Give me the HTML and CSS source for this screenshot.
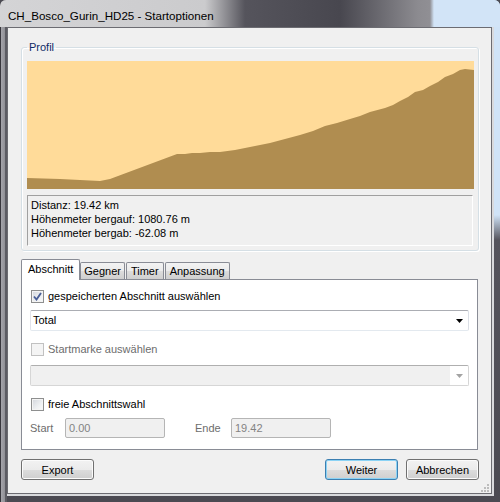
FILE: index.html
```html
<!DOCTYPE html>
<html lang="de">
<head>
    <meta charset="UTF-8">
    <meta name="viewport" content="width=device-width, initial-scale=1.0">
    <title>CH_Bosco_Gurin_HD25 - Startoptionen</title>
    <link rel="stylesheet" href="styles.css">
</head>
<body>

    <div class="window">
        <div class="titlebar">CH_Bosco_Gurin_HD25 - Startoptionen</div>

        <div class="client">
            <fieldset class="group">
                <legend>Profil</legend>
                <div class="chart">
                    <svg width="447" height="128" viewBox="0 0 447 128">
                        <rect width="447" height="128" fill="#ffdb99"/>
                        <polygon fill="#b08d50" points="0,117 33,118 73,120 83,118 150,93 158,93 165,92 173,92 183,91 193,91 208,89 223,86 243,82 258,78 273,74 286,70 298,65 310,62 323,58 333,55 343,51 358,47 366,44 373,40 381,36 388,31 396,29 403,25 411,21 418,16 426,13 433,9 438,8 447,9 447,128 0,128"/>
                    </svg>
                </div>
                <div class="stats">
                    <div>Distanz: 19.42 km</div>
                    <div>Höhenmeter bergauf: 1080.76 m</div>
                    <div>Höhenmeter bergab: -62.08 m</div>
                </div>
            </fieldset>

            <div class="tabs">
                <div class="tab-strip">
                    <div class="tab active">Abschnitt</div>
                    <div class="tab">Gegner</div>
                    <div class="tab">Timer</div>
                    <div class="tab">Anpassung</div>
                </div>
                <div class="tab-page">
                    <label class="check-row first">
                        <span class="checkbox">
                            <svg width="9" height="9" viewBox="0 0 9 9"><path d="M1 4.5 L3.5 7.5 L8 1" fill="none" stroke="#4a5f97" stroke-width="1.9"/></svg>
                        </span>
                        gespeicherten Abschnitt auswählen
                    </label>
                    <div class="combo">
                        <span class="combo-text">Total</span>
                        <span class="combo-arrow">
                            <svg width="7" height="4" viewBox="0 0 7 4"><polygon points="0,0 7,0 3.5,4" fill="#000"/></svg>
                        </span>
                    </div>

                    <label class="check-row disabled gap-large">
                        <span class="checkbox"></span>
                        Startmarke auswählen
                    </label>
                    <div class="combo disabled">
                        <span class="combo-text"></span>
                        <span class="combo-arrow">
                            <svg width="7" height="4" viewBox="0 0 7 4"><polygon points="0,0 7,0 3.5,4" fill="#a3a3a3"/></svg>
                        </span>
                    </div>

                    <label class="check-row gap-large">
                        <span class="checkbox"></span>
                        freie Abschnittswahl
                    </label>
                    <div class="range-row">
                        <span class="field-label">Start</span>
                        <span class="textbox">0.00</span>
                        <span class="field-label end">Ende</span>
                        <span class="textbox">19.42</span>
                    </div>
                </div>
            </div>

            <div class="buttons">
                <button class="btn">Export</button>
                <span class="spacer"></span>
                <button class="btn default">Weiter</button>
                <button class="btn">Abbrechen</button>
            </div>

            <div class="grip">
                <svg width="11" height="9" viewBox="0 0 11 9">
                    <rect x="8" y="0" width="2" height="2" fill="#bcbcbc"/>
                    <rect x="5" y="3" width="2" height="2" fill="#bcbcbc"/>
                    <rect x="8" y="3" width="2" height="2" fill="#bcbcbc"/>
                    <rect x="2" y="6" width="2" height="2" fill="#bcbcbc"/>
                    <rect x="5" y="6" width="2" height="2" fill="#bcbcbc"/>
                    <rect x="8" y="6" width="2" height="2" fill="#bcbcbc"/>
                </svg>
            </div>
        </div>
    </div>

</body>
</html>
```

FILE: styles.css
```css
body {
    margin: 0;
    font-family: 'Liberation Sans', Arial, sans-serif;
    font-size: 11px;
    color: #000;
    background-color: #4b4a52;
}

.window {
    width: 500px;
    height: 502px;
    display: flex;
    flex-direction: column;
    background:
        linear-gradient(to bottom, #d0e3f7 0, #d0e3f7 215px, #55545d 240px, #4b4a52 100%) right top / 8px 100% no-repeat,
        linear-gradient(to right, #38373d 0, #38373d 1px, #a5a5ab 1px, #8f8f95 5px, #5c5c63 5px) left top / 7px 100% no-repeat,
        #4b4a52;
    border-radius: 6px 6px 0 0;
    overflow: hidden;
}

.titlebar {
    height: 28px;
    box-sizing: border-box;
    padding: 9px 0 0 8px;
    font-size: 11.6px;
    line-height: 14px;
    white-space: nowrap;
    background: linear-gradient(to right, #d4d4d6 0, #cbcbcd 205px, #55545c 245px, #48474f 340px, #8c8b90 418px, #908f94 430px, #d2e4f7 434px);
    border-top: 1px solid #2c2c30;
    margin-top: -1px;
}

/* client area of the dialog */
.client {
    position: relative;
    flex: 1;
    margin: 0 8px 8px 7px;
    padding: 0 12px 0 13px;
    background-color: #f0f0f0;
    border: 1px solid #6c6c72;
    box-shadow: 1px 1px 0 1px #d9dadd;
}

.group {
    margin: 13px 0 0 0;
    padding: 8px 5px 4px 5px;
    min-width: 0;
    border: 1px solid #d5dfe5;
    border-radius: 3px;
    box-shadow: inset 1px 1px 0 #fff, 1px 1px 0 #fff;
}

.group legend {
    padding: 0 2px;
    line-height: 12px;
    color: #0f2a66;
}

.chart {
    height: 128px;
}

.chart svg {
    display: block;
}

.stats {
    margin-top: 6px;
    height: 47px;
    padding: 2px 3px 0;
    line-height: 14px;
    border: 1px solid;
    border-color: #a0a0a0 #fff #fff #a0a0a0;
}

/* tabs */
.tabs {
    margin-top: 8px;
}

.tab-strip {
    display: flex;
    align-items: flex-end;
    height: 20px;
    position: relative;
    z-index: 1;
}

.tab {
    height: 16px;
    padding: 0 4px;
    margin-left: 1px;
    line-height: 17px;
    border: 1px solid #898c95;
    border-bottom: none;
    border-radius: 2px 2px 0 0;
    background: linear-gradient(#f3f3f3 0, #ebebeb 50%, #dddddd 50%, #cfcfcf 100%);
}

.tab.active + .tab {
    padding: 0 3px;
    margin-left: 0;
}

.tab.active {
    height: 20px;
    padding: 0 6px;
    margin-left: 0;
    margin-bottom: -1px;
    line-height: 19px;
    background: #fff;
}

.tab-page {
    height: 169px;
    margin-right: 1px;
    padding: 0 8px;
    background-color: #fff;
    border: 1px solid #898c95;
}

.check-row {
    display: flex;
    align-items: center;
    height: 13px;
    line-height: 13px;
    gap: 4px;
    white-space: nowrap;
}

.check-row.first {
    margin-top: 10px;
}

.check-row.gap-large {
    margin-top: 12px;
}

.checkbox {
    width: 11px;
    height: 11px;
    margin-left: 1px;
    display: flex;
    align-items: center;
    justify-content: center;
    border: 1px solid #8e8f8f;
    background: linear-gradient(135deg, #d2d5db 0, #eef0f2 60%, #fafafa 100%);
    box-shadow: inset 0 0 0 1px #f4f4f4;
}

.check-row.disabled {
    color: #6d6d6d;
}

.check-row.disabled .checkbox {
    border-color: #c1c1c1;
    background: #f4f4f4;
    box-shadow: none;
}

.combo {
    display: flex;
    height: 21px;
    box-sizing: border-box;
    margin-top: 7px;
    border: 1px solid;
    border-color: #abadb3 #dbdfe6 #e3e9ef #e2e3ea;
    border-radius: 2px;
    background-color: #fff;
}

.combo + .check-row {
    margin-top: 12px;
}

.check-row + .combo.disabled {
    margin-top: 9px;
}

.combo-text {
    flex: 1;
    padding-left: 2px;
    line-height: 19px;
}

.combo-arrow {
    width: 18px;
    display: flex;
    align-items: center;
    justify-content: center;
}

.combo-arrow svg {
    display: block;
}

.combo.disabled {
    border-color: #afafaf #d6d6d6 #d6d6d6 #d6d6d6;
}

.combo.disabled .combo-text {
    background-color: #f0f0f0;
}

.range-row {
    display: flex;
    align-items: center;
    margin-top: 7px;
}

.field-label {
    width: 35px;
    color: #6d6d6d;
}

.field-label.end {
    width: 36px;
    margin-left: 30px;
}

.textbox {
    width: 100px;
    height: 20px;
    box-sizing: border-box;
    padding-left: 3px;
    line-height: 18px;
    color: #838383;
    background-color: #f0f0f0;
    border: 1px solid #b5b5b5;
    border-radius: 2px;
}

/* dialog buttons */
.buttons {
    display: flex;
    margin-top: 9px;
    gap: 8px;
}

.spacer {
    flex: 1;
}

.btn {
    width: 73px;
    height: 21px;
    padding: 0;
    font-family: 'Liberation Sans', Arial, sans-serif;
    font-size: 11px;
    color: #000;
    border: 1px solid #707070;
    border-radius: 3px;
    background: linear-gradient(#f2f2f2 0, #ebebeb 50%, #dddddd 50%, #cfcfcf 100%);
    box-shadow: inset 0 0 0 1px #fbfbfb;
}

.btn.default {
    border-color: #3c7fb1;
    box-shadow: inset 0 0 0 1px #8bd3f5;
}

.grip {
    position: absolute;
    right: 1px;
    bottom: 0;
    line-height: 0;
}
```
